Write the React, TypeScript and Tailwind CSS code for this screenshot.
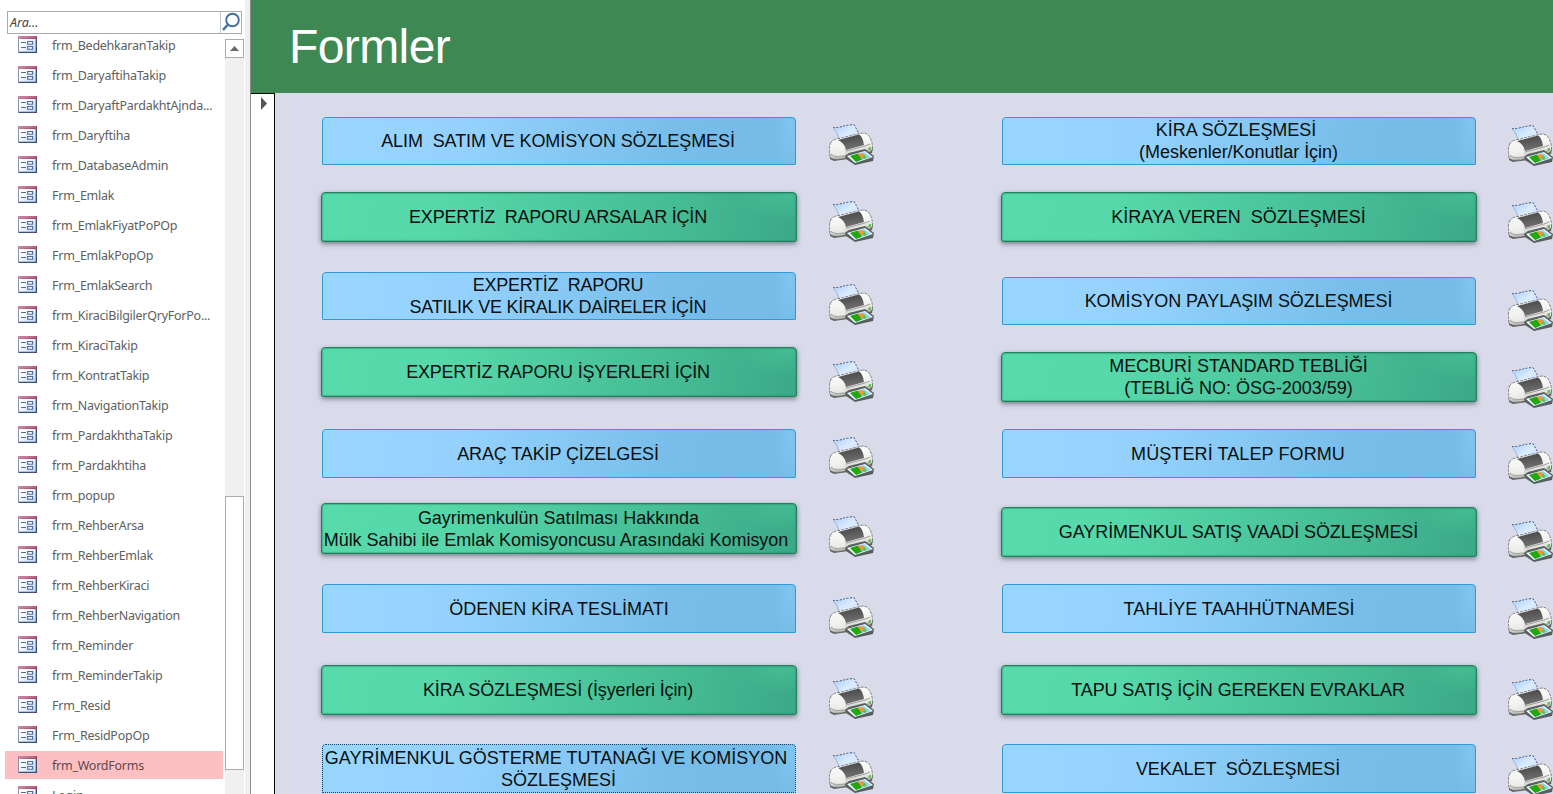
import React from "react";

const forms = [
  "frm_BedehkaranTakip", "frm_DaryaftihaTakip", "frm_DaryaftPardakhtAjnda...", "frm_Daryftiha",
  "frm_DatabaseAdmin", "Frm_Emlak", "frm_EmlakFiyatPoPOp", "Frm_EmlakPopOp", "Frm_EmlakSearch",
  "frm_KiraciBilgilerQryForPo...", "frm_KiraciTakip", "frm_KontratTakip", "frm_NavigationTakip",
  "frm_PardakhthaTakip", "frm_Pardakhtiha", "frm_popup", "frm_RehberArsa", "frm_RehberEmlak",
  "frm_RehberKiraci", "frm_RehberNavigation", "frm_Reminder", "frm_ReminderTakip", "Frm_Resid",
  "Frm_ResidPopOp", "frm_WordForms", "Login",
];

type Entry = { text: string; box: string; label?: string; green?: boolean; focused?: boolean };

const leftEntries: Entry[] = [
  { text: "ALIM  SATIM VE KOMİSYON SÖZLEŞMESİ", box: "mt-6 h-12", label: "pb-px pr-0.5 tracking-[-0.09px]" },
  { text: "EXPERTİZ  RAPORU ARSALAR İÇİN", box: "mt-[27px] h-[50px]", label: "pb-px pr-0.5 tracking-[-0.2px]", green: true },
  { text: "EXPERTİZ  RAPORU\nSATILIK VE KİRALIK DAİRELER İÇİN", box: "mt-[30px] h-12", label: "pb-px pr-0.5 tracking-[-0.25px]" },
  { text: "EXPERTİZ RAPORU İŞYERLERİ İÇİN", box: "mt-[27px] h-[50px]", label: "pb-px pr-0.5 tracking-[-0.2px]", green: true },
  { text: "ARAÇ TAKİP ÇİZELGESİ", box: "mt-8 h-[49px]", label: "pt-px pr-0.5 tracking-[-0.12px]" },
  { text: " Gayrimenkulün Satılması Hakkında\nMülk Sahibi ile Emlak Komisyoncusu Arasındaki Komisyon", box: "mt-[25px] h-[51px]", label: "pt-px pr-1.5 tracking-[-0.03px]", green: true },
  { text: "ÖDENEN KİRA TESLİMATI", box: "mt-[30px] h-[49px]", label: "pt-px" },
  { text: "KİRA SÖZLEŞMESİ (İşyerleri İçin)", box: "mt-8 h-[50px]", label: "pb-px pr-0.5 tracking-[-0.12px]", green: true },
  { text: "GAYRİMENKUL GÖSTERME TUTANAĞI VE KOMİSYON\n SÖZLEŞMESİ", box: "mt-[29px] h-[49px]", label: "pt-px pr-1.5", focused: true },
];

const rightEntries: Entry[] = [
  { text: "KİRA SÖZLEŞMESİ \n(Meskenler/Konutlar İçin)", box: "mt-6 h-12", label: "pb-px pr-px tracking-[-0.05px]" },
  { text: "KİRAYA VEREN  SÖZLEŞMESİ", box: "mt-[27px] h-[50px]", label: "pb-px pr-px", green: true },
  { text: "KOMİSYON PAYLAŞIM SÖZLEŞMESİ", box: "mt-[35px] h-12", label: "pb-px pr-px tracking-[-0.06px]" },
  { text: "MECBURİ STANDARD TEBLİĞİ\n(TEBLİĞ NO: ÖSG-2003/59)", box: "mt-[27px] h-[50px]", label: "pb-px pr-px tracking-[-0.03px]", green: true },
  { text: "MÜŞTERİ TALEP FORMU", box: "mt-[27px] h-[49px]", label: "pt-px pr-0.5 tracking-[0.1px]" },
  { text: "GAYRİMENKUL SATIŞ VAADİ SÖZLEŞMESİ", box: "mt-[29px] h-[50px]", label: "pb-px pr-px tracking-[-0.09px]", green: true },
  { text: "TAHLİYE TAAHHÜTNAMESİ", box: "mt-[27px] h-[49px]", label: "pt-px" },
  { text: "TAPU SATIŞ İÇİN GEREKEN EVRAKLAR", box: "mt-8 h-[50px]", label: "pb-px pr-0.5 tracking-[-0.12px]", green: true },
  { text: "VEKALET  SÖZLEŞMESİ", box: "mt-[29px] h-[49px]", label: "pt-px pr-0.5 tracking-[-0.08px]" },
];

const leftPrinters = ["mt-[31px]", "mt-9", "mt-[42px]", "mt-9", "mt-[35px]", "mt-[38px]", "mt-10", "mt-10", "mt-[33px]"];
const rightPrinters = ["mt-8", "mt-9", "mt-[47px]", "mt-9", "mt-[35px]", "mt-[37px]", "mt-9", "mt-10", "mt-[35px]"];

function FormIcon() {
  return (
    <svg width="19" height="17" viewBox="0 0 19 17" className="mb-0.5 shrink-0">
      <defs>
        <linearGradient id="sheet" x1="0" y1="0" x2="1" y2="1">
          <stop offset="0.3" stopColor="#fff" />
          <stop offset="1" stopColor="#b9d3f5" />
        </linearGradient>
        <linearGradient id="cap" x1="0" y1="0" x2="1" y2="0">
          <stop offset="0" stopColor="#c8849f" />
          <stop offset="1" stopColor="#993d62" />
        </linearGradient>
      </defs>
      <rect x="0.5" y="1" width="18" height="15.5" fill="url(#sheet)" stroke="#8793ad" />
      <path d="M18.3 3v13.3H1" fill="none" stroke="#3c4d73" strokeWidth="1.3" />
      <path d="M0 0h19v3H0z" fill="url(#cap)" />
      <path d="M1 1h17" stroke="#d592aa" strokeWidth="0.8" />
      <path d="M3 6.5h5M3 11.5h5" stroke="#58698e" strokeWidth="1.2" />
      <path d="M9.6 5.5h5v2.8h-5zM9.6 10.5h5v2.8h-5z" fill="#eef4ff" stroke="#536b9c" strokeWidth="1.1" />
    </svg>
  );
}

function Printer({ gap }: { gap: string }) {
  return (
    <svg width="46" height="41" viewBox="0 0 46 41" className={`block shrink-0 ${gap}`}>
      <defs>
        <linearGradient id="body" x1="0.35" y1="0" x2="0.55" y2="1">
          <stop offset="0" stopColor="#fff" />
          <stop offset="0.5" stopColor="#f1f1ee" />
          <stop offset="0.8" stopColor="#d2d2ce" />
          <stop offset="1" stopColor="#8d8d8a" />
        </linearGradient>
        <linearGradient id="paper" x1="0" y1="0" x2="1" y2="1">
          <stop offset="0" stopColor="#a9cefd" />
          <stop offset="0.5" stopColor="#dbecff" />
          <stop offset="1" stopColor="#bcd9fc" />
        </linearGradient>
        <linearGradient id="lid" x1="0" y1="0" x2="0.2" y2="1">
          <stop offset="0" stopColor="#454545" />
          <stop offset="1" stopColor="#716f71" />
        </linearGradient>
      </defs>
      <path d="M1 29v6l4 2 14-2 24-6 1-5z" fill="#626262" />
      <path d="M4 3.500Q8 4 13 2.500T25 .5L32 14 11 19Q9.500 8 4 3.500z" fill="url(#paper)" />
      <path d="M4 3.500Q8 4 13 2.500T25 .5L32 13" fill="none" stroke="#485870" strokeWidth="1" strokeDasharray="2 1.500" />
      <path d="M4 3.500Q8.500 8 11 17" fill="none" stroke="#8baad1" strokeWidth="0.8" />
      <path d="M1.500 19Q4 15 10 14.500L31 9.500Q37 8 40 12 43.500 17 43.500 24 43 27 40 28L15 34.500Q4 37 1 33-.5 25 1.500 19z" fill="url(#body)" stroke="#696969" strokeWidth="0.8" strokeDasharray="3 1" />
      <path d="M2.500 21Q8 18 13 22 17 26 16 33 6 35 2 32 0 25 2.500 21z" fill="#f5f5f2" opacity="0.65" />
      <path d="M2 30Q4 34 16 32L40 26" fill="none" stroke="#aaa9a6" strokeWidth="1.500" />
      <path d="M9 16L30 10.500Q34 13 35 21L17 26Q15.500 19 9 16z" fill="url(#lid)" />
      <path d="M17 27L36 22 41 20" fill="none" stroke="#898989" strokeWidth="0.8" />
      <path d="M39.500 23.500l2.500-.7v3l-2.500.7z" fill="#65bd55" />
      <path d="M16 32l4-3 16-4 9 7-1 5-18 4-9-6z" fill="#56615f" />
      <path d="M18 32l18-5 8 6-18 6z" fill="#f5fbff" />
      <path d="M21 32l14-4 7 5-15 5z" fill="#8ed2f6" />
      <path d="M21 32l8-2.500 4 6-6 2.500z" fill="#20a80d" />
      <path d="M31 32l4 3 3-1-3-4z" fill="#65c33d" />
      <path d="M29 30l4-1 2 3-3 2z" fill="#ff922e" />
    </svg>
  );
}

function ButtonColumn({ entries }: { entries: Entry[] }) {
  return (
    <div className="flex w-[476px] shrink-0 flex-col items-center">
      {entries.map((e) => (
        <button
          key={e.text}
          className={`flex shrink-0 items-center justify-center overflow-visible whitespace-pre text-center text-[18px] leading-[22px] text-[#07100f] ${e.box} ${
            e.green
              ? "w-[476px] rounded-t-[4px] rounded-b-[2px] border border-[#25805f] bg-[radial-gradient(ellipse_50px_24px_at_98%_8%,rgba(80,210,160,0.4),transparent),linear-gradient(100deg,#57dbab_0%,#56d8aa_25%,#44b992_78%,#3ba987_100%)] shadow-[0_2px_5px_rgba(55,65,80,0.6),inset_0_0_1px_1px_rgba(45,145,110,0.5)]"
              : "w-[474px] rounded-t-[4px] rounded-b-[1px] border border-[#3399d6] bg-[radial-gradient(ellipse_18px_50px_at_99%_20%,rgba(135,205,250,0.55),transparent),linear-gradient(100deg,#99d6ff_0%,#94d1fe_30%,#77bde9_75%,#75bbe6_100%)]"
          } ${e.focused ? "border-dotted border-[#174766]" : ""}`}
        >
          <span className={e.label}>{e.text}</span>
        </button>
      ))}
    </div>
  );
}

function PrinterColumn({ gaps }: { gaps: string[] }) {
  return (
    <div className="flex w-[46px] shrink-0 flex-col">
      {gaps.map((gap, i) => <Printer key={i} gap={gap} />)}
    </div>
  );
}

export default function App() {
  return (
    <div className="flex h-[794px] w-[1553px] overflow-hidden bg-white font-['Liberation_Sans',Arial,sans-serif]">
      <aside className="flex w-[245px] shrink-0 flex-col font-['Noto_Sans',sans-serif]">
        <div className="mt-[11px] ml-[7px] flex h-[23px] w-[235px] shrink-0 border border-[#ababab]">
          <div className="flex-1 pl-0.5 text-[12.5px] leading-[21px] text-[#444] italic">Ara...</div>
          <div className="w-[21px] border-l border-[#c2cad2]">
            <svg width="20" height="21" viewBox="0 0 20 21">
              <circle cx="11.5" cy="8" r="6.3" fill="#fff" stroke="#416fa6" strokeWidth="1.9" />
              <path d="M7 12.500L2 18" stroke="#416fa6" strokeWidth="2.500" />
            </svg>
          </div>
        </div>
        <div className="flex min-h-0 flex-1">
          <ul className="flex w-[225px] flex-col gap-0.5 overflow-hidden pl-[5px]">
            {forms.map((name, i) => (
              <li
                key={name}
                className={`flex w-[218px] shrink-0 items-center pl-[13px] text-[12.5px] tracking-[-0.25px] ${
                  i === 0 ? "-mt-[3px] h-7" : "h-7"
                } ${name === "frm_WordForms" ? "bg-[#fdc0c2] text-[#5f4749]" : "text-[#606060]"}`}
              >
                <FormIcon />
                <span className="ml-[15px] pt-[3px] whitespace-nowrap">{name}</span>
              </li>
            ))}
          </ul>
          <div className="mt-[5px] flex w-[19px] flex-col bg-[#f0f0f0]">
            <div className="flex h-[19px] items-center justify-center border border-[#ababab] bg-white">
              <svg width="9" height="5" viewBox="0 0 9 5"><path d="M0 5L4.500 0 9 5z" fill="#686868" /></svg>
            </div>
            <div className="mt-[438px] h-[274px] border border-[#ababab] bg-white" />
          </div>
        </div>
      </aside>
      <div className="w-[6px] shrink-0 border-r border-[#8c8c8c] bg-[#f0f0f2]" />
      <main className="flex min-w-0 flex-1 flex-col">
        <header className="flex h-[93px] shrink-0 items-center bg-[#3e8853] pl-[38px]">
          <h1 className="text-[48px] leading-none tracking-[-0.6px] text-white">Formler</h1>
        </header>
        <div className="flex min-h-0 flex-1 overflow-hidden bg-[#d9dbea]">
          <div className="w-6 shrink-0 border-t border-r border-black bg-white pt-[3px] pl-[10px]">
            <svg width="6" height="13" viewBox="0 0 6 13"><path d="M0 0l6 6.500L0 13z" fill="#555" /></svg>
          </div>
          <div className="flex pl-[46px]">
            <ButtonColumn entries={leftEntries} />
            <div className="w-8 shrink-0" />
            <PrinterColumn gaps={leftPrinters} />
            <div className="w-[126px] shrink-0" />
            <ButtonColumn entries={rightEntries} />
            <div className="w-[31px] shrink-0" />
            <PrinterColumn gaps={rightPrinters} />
          </div>
        </div>
      </main>
    </div>
  );
}
